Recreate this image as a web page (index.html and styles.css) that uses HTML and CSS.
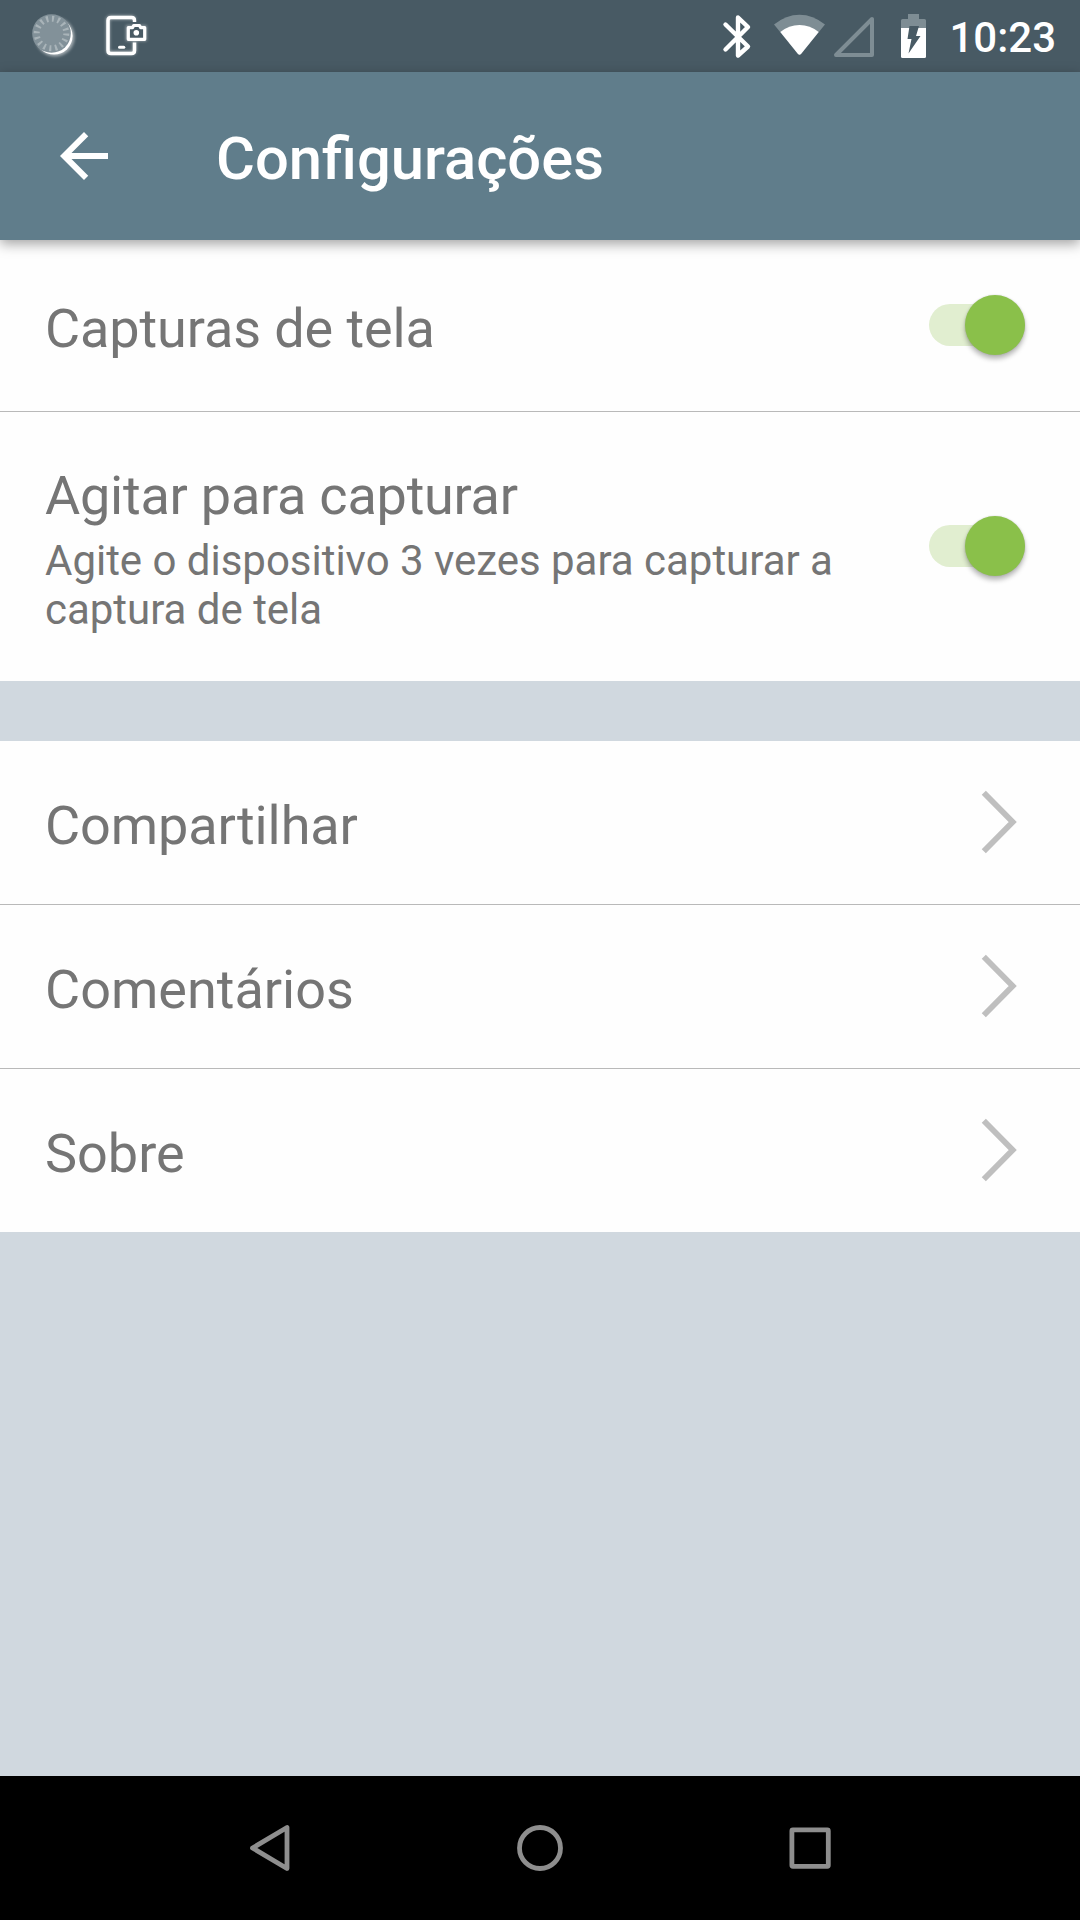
FILE: index.html
```html
<!DOCTYPE html>
<html lang="pt">
<head>
<meta charset="utf-8">
<title>Configurações</title>
<link rel="stylesheet" href="styles.css">
</head>
<body>
<div class="screen">
  <div class="status-bar">
    <svg class="status-icons" width="160" height="72" viewBox="0 0 160 72">
      <defs>
        <filter id="glow" x="-30%" y="-30%" width="160%" height="160%"><feGaussianBlur stdDeviation="1.6"/></filter>
      </defs>
      <circle cx="55" cy="37" r="19.5" fill="#fff" opacity=".5" filter="url(#glow)"/>
      <circle cx="54" cy="36" r="18.6" fill="#fff"/>
      <circle cx="51.5" cy="33.5" r="19.3" fill="#829199"/>
      <circle cx="51.5" cy="33.5" r="14.8" fill="none" stroke="#a9b4b9" stroke-width="6" stroke-dasharray="2.1 3.712"/>
      <g fill="none" stroke="#fff" opacity=".5" filter="url(#glow)" stroke-width="4"><path d="M134 20V20Q134 17.500 131 17.500H111Q108 17.500 108 20.500V50Q108 53 111 53H131Q134.500 53 134.500 50V42M128 27.500H144.500V39H128Z"/></g>
      <path d="M134.500 22V20.500Q134.500 17.500 131.500 17.500H111Q108 17.500 108 20.500V50.500Q108 53.500 111 53.500H131.500Q134.500 53.500 134.500 50.500V42.500" fill="none" stroke="#fff" stroke-width="3.500"/>
      <path d="M119.500 47.300H123.800" stroke="#fff" stroke-width="3" stroke-linecap="round"/>
      <path d="M128.300 27.700H132.500L133.700 25.500H139.500L140.700 27.700H144.700V39.300H128.300Z" fill="#485a64" stroke="#fff" stroke-width="3.200" stroke-linejoin="round"/>
      <circle cx="136.300" cy="32.800" r="2.800" fill="#fff"/>
    </svg>
    <svg class="status-icons" width="240" height="72" viewBox="700 0 240 72">
      <path d="M725.500 24.500L748 46.500L738 55.500V17.500L748 27L725.500 49.500" fill="none" stroke="#fff" stroke-width="4.400" stroke-linejoin="round" stroke-linecap="round"/>
      <path d="M774 24.500Q786 14.700 799.500 14.700T825 24.500L801 54Q799.500 55.500 798 54Z" fill="#7e8d94"/>
      <path d="M780.300 32Q789 25 799.500 25T818.700 32L801 54Q799.500 55.500 798 54Z" fill="#fff"/>
      <path d="M872 19V55H836Z" fill="none" stroke="#7e8d94" stroke-width="4" stroke-linejoin="round"/>
      <path d="M908 14H919V19H924.500Q926 19 926 20.500V28H901V20.500Q901 19 902.500 19H908Z" fill="#7e8d94"/>
      <path d="M901 28H926V56.500Q926 58 924.500 58H902.500Q901 58 901 56.500Z" fill="#fff"/>
      <path d="M909.500 26H919L916 36H920.500L908.500 53.500L911.500 39H907.500Z" fill="#485a64"/>
    </svg>
    <span class="clock">10:23</span>
  </div>

  <header class="app-bar">
    <svg width="72" height="72" viewBox="0 0 24 24"><path fill="#fff" d="M20 11H7.830l5.590-5.590L12 4l-8 8 8 8 1.410-1.410L7.830 13H20v-2z"/></svg>
    <h1 class="title">Configurações</h1>
  </header>

  <main class="content">
    <section class="group">
      <div class="row row-capture">
        <div class="label">Capturas de tela</div>
        <div class="switch"><div class="thumb"></div></div>
      </div>
      <div class="row row-shake">
        <div class="texts">
          <div class="label label-stacked">Agitar para capturar</div>
          <div class="hint">Agite o dispositivo 3 vezes para capturar a captura de tela</div>
        </div>
        <div class="switch"><div class="thumb"></div></div>
      </div>
    </section>
    <section class="group">
      <div class="row row-link">
        <div class="label">Compartilhar</div>
        <svg class="chevron" width="36" height="64" viewBox="0 0 36 64"><path d="M2.800 2.800L31.700 32L2.800 61.200"/></svg>
      </div>
      <div class="row row-link">
        <div class="label label-even">Comentários</div>
        <svg class="chevron" width="36" height="64" viewBox="0 0 36 64"><path d="M2.800 2.800L31.700 32L2.800 61.200"/></svg>
      </div>
      <div class="row row-link">
        <div class="label label-even">Sobre</div>
        <svg class="chevron" width="36" height="64" viewBox="0 0 36 64"><path d="M2.800 2.800L31.700 32L2.800 61.200"/></svg>
      </div>
    </section>
  </main>

  <nav class="nav-bar">
    <svg width="60" height="60" viewBox="240 1818 60 60"><path d="M287 1827.500V1868.500L252.500 1848Z"/></svg>
    <svg width="60" height="60" viewBox="510 1818 60 60"><circle cx="540" cy="1848" r="20.500"/></svg>
    <svg width="60" height="60" viewBox="780 1818 60 60"><rect x="791.900" y="1829.900" width="36.400" height="36.400" rx="1"/></svg>
  </nav>
</div>
</body>
</html>
```
FILE: styles.css
```css
* { box-sizing: border-box; }

body {
  margin: 0;
  font-family: Roboto, sans-serif;
  background: #d0d8df;
}

svg { display: block; flex: none; }

.screen {
  display: flex;
  flex-direction: column;
  width: 1080px;
  height: 1920px;
  overflow: hidden;
}

.status-bar {
  display: flex;
  align-items: center;
  justify-content: space-between;
  height: 72px;
  padding-right: 24px;
  background: #485a64;
}

.status-icons:nth-child(2) { margin-left: auto; }

.clock {
  width: 116px;
  padding-top: 4px;
  text-align: right;
  font-size: 42px;
  font-weight: 500;
  line-height: 50px;
  color: #fff;
}

.app-bar {
  display: flex;
  align-items: center;
  gap: 96px;
  height: 168px;
  padding-left: 48px;
  background: #607d8b;
  box-shadow: 0 4px 12px rgba(0, 0, 0, .36);
  z-index: 1;
}

.title {
  margin: 0;
  padding-top: 6px;
  font-size: 59.7px;
  font-weight: 500;
  line-height: 70px;
  color: #fff;
}

.content {
  display: flex;
  flex: 1;
  flex-direction: column;
  gap: 60px;
  background: #d0d8df;
}

.group { background: #fefefe; }

.row {
  display: flex;
  align-items: center;
  justify-content: space-between;
  padding: 0 63px 0 45px;
  border-bottom: 1px solid #b9b9b9;
}

.row:last-child { border-bottom: 0; }

.row-capture { height: 172px; padding-right: 55px; }
.row-shake { height: 269px; padding-right: 55px; }
.row-link { height: 164px; }
.row-link:last-child { height: 163px; }

.label {
  padding-top: 7px;
  font-size: 54px;
  line-height: 64px;
  letter-spacing: -.1px;
  color: #757575;
}

.label-even { letter-spacing: 0; }

.label-stacked {
  padding: 0 0 8px;
  letter-spacing: -.23px;
}

.texts {
  width: 800px;
  padding-top: 5px;
}

.hint {
  font-size: 42px;
  line-height: 49px;
  letter-spacing: -.02px;
  color: #757575;
}

.switch {
  display: flex;
  align-items: center;
  justify-content: flex-end;
  width: 96px;
  height: 42px;
  margin-bottom: 1px;
  border-radius: 21px;
  background: #e1eed0;
}

.thumb {
  flex: none;
  width: 60px;
  height: 60px;
  border-radius: 50%;
  background: #8ac04a;
  box-shadow: 0 4px 5px rgba(0, 0, 0, .28), 0 0 2px rgba(0, 0, 0, .15);
}

.chevron { margin-bottom: 1px; }

.chevron path {
  fill: none;
  stroke: #bfbfbf;
  stroke-width: 5.8;
}

.nav-bar {
  display: flex;
  align-items: center;
  justify-content: center;
  gap: 210px;
  height: 144px;
  background: #000;
}

.nav-bar svg {
  fill: none;
  stroke: #8e8e8e;
  stroke-width: 4.8;
  stroke-linejoin: round;
}
```
